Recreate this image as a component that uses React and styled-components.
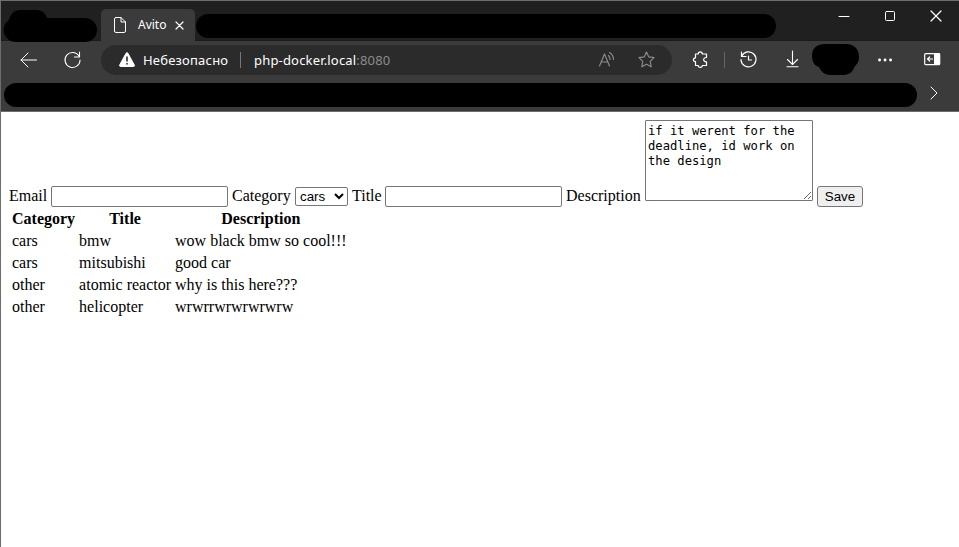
import React from "react";
import styled, { createGlobalStyle } from "styled-components";

const Global = createGlobalStyle`
  * { box-sizing: border-box; }
  body { margin: 0; background: #fff; overflow: hidden; }
`;

const Window = styled.div`
  width: 959px;
  height: 547px;
  border-top: 1px solid #6c6d6c;
  border-left: 1px solid #6c6d6c;
  background: #fff;
  overflow: hidden;
`;

const TitleBar = styled.header`
  display: flex;
  height: 40px;
  background: #202020;
  border-bottom: 1px solid #1b1b1b;
  font-family: "Noto Sans", sans-serif;
`;

const Tab = styled.div`
  display: flex;
  align-items: center;
  width: 94px;
  height: 32px;
  margin: 8px 0 0 4px;
  padding-left: 12px;
  border-radius: 5px 5px 0 0;
  background: #3b3b3b;
  color: #fff;
  font-size: 12px;
`;

const TabTitle = styled.span`
  width: 28px;
  margin: 0 9px 0 11px;
  line-height: 16px;
`;

const Redacted = styled.div`
  flex: none;
  width: ${(p) => p.$width}px;
  height: 24px;
  margin: ${(p) => p.$margin};
  border-radius: 12px;
  background: #000;
`;

const Icon = styled.svg`
  display: block;
  flex: none;
  overflow: visible;
  fill: none;
  stroke: ${(p) => p.$color || "#fff"};
  stroke-width: ${(p) => p.$stroke || 1};
  stroke-linecap: round;
  stroke-linejoin: round;
  margin-left: ${(p) => p.$gap || 0}px;
`;

const Controls = styled.div`
  display: flex;
  height: 30px;
  align-items: center;
  margin-left: auto;
  padding-right: 18px;
`;

const Toolbar = styled.div`
  display: flex;
  align-items: center;
  height: 39px;
  padding: 0 0 2px 19px;
  background: #3b3b3b;
`;

const Address = styled.div`
  display: flex;
  align-items: center;
  width: 571px;
  height: 30px;
  margin-left: 20px;
  padding-left: 18px;
  border-radius: 15px;
  background: #2b2b2b;
  color: #fff;
  font-family: "Noto Sans", sans-serif;
  font-size: 13px;
  white-space: nowrap;
`;

const Security = styled.span`
  width: 86px;
  margin-left: 8px;
  letter-spacing: 0.2px;
`;

const Divider = styled.i`
  flex: none;
  width: 1px;
  height: 16px;
  margin-left: ${(p) => p.$gap}px;
  background: ${(p) => p.$color};
`;

const Url = styled.span`
  width: 138px;
  margin-left: 13px;
  letter-spacing: 0.18px;
`;

const Port = styled.span`
  color: #8c8c8c;
`;

const Bookmarks = styled.div`
  display: flex;
  align-items: center;
  height: 32px;
  padding-bottom: 2px;
  background: #3b3b3b;
  border-bottom: 1px solid #6c6d6c;
`;

const Page = styled.main`
  padding: 8px;
  color: #000;
  font-family: "Liberation Serif", "Times New Roman", serif;
  font-size: 16px;
`;

const Form = styled.form`
  display: flex;
  align-items: flex-end;
  height: 87px;
`;

const Label = styled.label`
  width: ${(p) => p.$width}px;
  flex: none;
  height: 18px;
  margin-bottom: 2px;
  line-height: 18px;
`;

const Input = styled.input`
  width: 177px;
  height: 21px;
  margin: 0 4px 0 0;
  border: 1px solid #767676;
  border-radius: 2px;
`;

const Select = styled.select`
  width: 53px;
  height: 19px;
  margin: 0 4px 1px 0;
  padding: 0;
  border: 1px solid #767676;
  border-radius: 2px;
  background: #fff;
  color: #000;
  font: 13.333px "Liberation Sans", Arial, sans-serif;
`;

const TextArea = styled.textarea`
  width: 168px;
  height: 81px;
  margin: 0 4px 6px 0;
  padding: 3px 2px 2px;
  border: 1px solid #767676;
  border-radius: 1px;
  color: #000;
  font: 12.18px/15px "DejaVu Sans Mono", monospace;
`;

const Button = styled.button`
  width: 46px;
  height: 21px;
  margin-bottom: 0;
  padding: 0;
  border: 1px solid #767676;
  border-radius: 3px;
  background: #efefef;
  color: #000;
  font: 13.333px "Liberation Sans", Arial, sans-serif;
`;

const Table = styled.table`
  border-spacing: 2px;
  line-height: 18px;
`;

const Cell = styled.td`
  padding: 1px;
  white-space: nowrap;
`;

const rows = [
  ["cars", "bmw", "wow black bmw so cool!!!"],
  ["cars", "mitsubishi", "good car"],
  ["other", "atomic reactor", "why is this here???"],
  ["other", "helicopter", "wrwrrwrwrwrwrw"],
];

export default function App() {
  return (
    <>
      <Global />
      <Window>
        <TitleBar>
          <Icon width="93" height="33" $gap={3} viewBox="0 0 93 33">
            <path fill="#000" stroke="none" transform="translate(0 8)" d="M14 1H33Q40 1 43 9H81A12 12 0 0 1 81 33H12A12 12 0 0 1 5 11Q7 2 15 1Z" />
          </Icon>
          <Tab>
            <Icon width="14" height="18" viewBox="0 0 14 18">
              <path d="M3 1.500H8L12.500 6V15Q12.500 16.500 11 16.500H3Q1.500 16.500 1.500 15V3Q1.500 1.500 3 1.500ZM8 1.500V6H12.500" />
            </Icon>
            <TabTitle>Avito</TabTitle>
            <Icon width="9" height="9" viewBox="0 0 9 9" $stroke={1.2}><path d="M1 1L8 8M8 1L1 8" /></Icon>
          </Tab>
          <Redacted $width={580} $margin="13px 0 0 1px" />
          <Controls>
            <Icon width="10" height="10"><path d="M0 5.500H10" /></Icon>
            <Icon width="10" height="10" $gap={36}><rect x=".5" y=".5" width="9" height="9" rx="1" /></Icon>
            <Icon width="10" height="10" $gap={36} $stroke={1.2}><path d="M0 0L10 10M10 0L0 10" /></Icon>
          </Controls>
        </TitleBar>
        <Toolbar>
          <Icon width="17" height="16"><path d="M16.500 8H1M8 1L1 8L8 15" /></Icon>
          <Icon width="17" height="17" $gap={27} $stroke={1.1}>
            <path d="M15.200 5.600A7.500 7.500 0 1 0 16 9M15.500 1V6H10.500" />
          </Icon>
          <Address>
            <Icon width="16" height="15"><path fill="#fff" stroke="#fff" d="M7.200 1.100Q8 0 8.800 1.100L15.300 13Q15.800 14.500 14.500 14.500H1.500Q.2 14.500.7 13Z" /><path stroke="#2b2b2b" strokeWidth="1.600" d="M8 5V9M8 11.600V12" /></Icon>
            <Security>Небезопасно</Security>
            <Divider $gap={11} $color="#777" />
            <Url>php-docker.local<Port>:8080</Port></Url>
            <Icon width="15" height="15" $gap={207} $color="#8c8c8c" $stroke={1.15}>
              <path d="M.5 14L5.500 2L10.500 14M2.400 10H8.600M9.500 3.500Q11 5 11 7.500M10.500.5Q14.500 3 14.500 7.500" />
            </Icon>
            <Icon width="17" height="17" $gap={24} $color="#8c8c8c" $stroke={1.15}>
              <path d="M8.500 1L10.800 5.900L16 6.600L12.200 10.300L13.200 15.800L8.500 13.200L3.800 15.800L4.800 10.300L1 6.600L6.200 5.900Z" />
            </Icon>
          </Address>
          <Icon width="15" height="17" $gap={21} $stroke={1.2}>
            <path d="M2.500 3H5.200C5.200.1 9.300.1 9.300 3H13.500V6.500C9.700 6.300 9.700 11 13.500 10.800V14.500H9.300C9.300 16.900 5.200 16.900 5.200 14.500H2.500V10.700C-.3 10.500-.3 7 2.500 6.800Z" />
          </Icon>
          <Divider $gap={16} $color="#666" />
          <Icon width="17" height="17" $gap={15} $stroke={1.2}>
            <path d="M1.800 5A7.500 7.500 0 1 1 1 8.700M1.500 1V5.500H6M8.500 5V9H11.500" />
          </Icon>
          <Icon width="13" height="17" $gap={29} $stroke={1.1}>
            <path d="M6.500 0V13M1.500 8.500L6.500 13.500L11.500 8.500M1 15.800H12" />
          </Icon>
          <Icon width="47" height="32" $gap={13}>
            <path fill="#000" stroke="none" d="M13 0H34C42 0 47 5 47 13C47 20 43 21 42 24C40 29 36 31 31 31H18C12 31 9 27 7 23C3 22 0 18 0 12C0 4 5 0 13 0Z" />
          </Icon>
          <Icon width="14" height="4" $gap={19}><path strokeWidth="2.800" d="M1.500 2H1.600M7 2H7.100M12.500 2H12.600" /></Icon>
          <Icon width="17" height="13" $gap={32} $stroke={1.2}>
            <rect x=".7" y=".7" width="15" height="11" rx="1" />
            <path fill="#fff" stroke="none" d="M10 0H15Q16 0 16 1V11Q16 12 15 12H10Z" />
            <path d="M8.500 6H4M5.600 4L3.500 6L5.600 8" />
          </Icon>
        </Toolbar>
        <Bookmarks>
          <Redacted $width={913} $margin="0 0 0 3px" />
          <Icon width="8" height="16" $gap={13}><path d="M1 0L7 6L1 12" /></Icon>
        </Bookmarks>
        <Page>
          <Form onSubmit={(e) => e.preventDefault()}>
            <Label $width={42}>Email</Label><Input />
            <Label $width={63}>Category</Label>
            <Select defaultValue="cars"><option>cars</option><option>other</option></Select>
            <Label $width={33}>Title</Label><Input />
            <Label $width={79}>Description</Label>
            <TextArea spellCheck="false" defaultValue="if it werent for the deadline, id work on the design" />
            <Button type="submit">Save</Button>
          </Form>
          <Table>
            <thead>
              <tr>{["Category", "Title", "Description"].map((h) => <Cell as="th" key={h}>{h}</Cell>)}</tr>
            </thead>
            <tbody>
              {rows.map((r) => <tr key={r[1]}>{r.map((c) => <Cell key={c}>{c}</Cell>)}</tr>)}
            </tbody>
          </Table>
        </Page>
      </Window>
    </>
  );
}
